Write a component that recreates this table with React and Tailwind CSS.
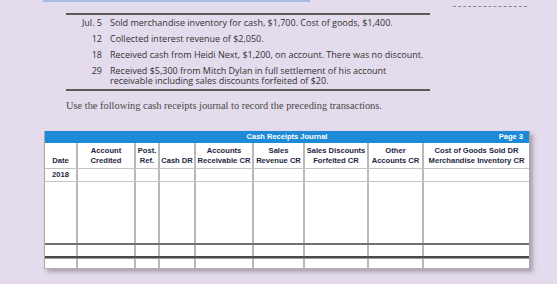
import React from "react";

const cols = "grid grid-cols-[31px_58px_24px_36px_58px_51px_64px_55px_107px]";
const cell = "border-l-2 border-[#b8b8b8] first:border-l-0";

const headers = [
  ["Date"],
  ["Account", "Credited"],
  ["Post.", "Ref."],
  ["Cash DR"],
  ["Accounts", "Receivable CR"],
  ["Sales", "Revenue CR"],
  ["Sales Discounts", "Forfeited CR"],
  ["Other", "Accounts CR"],
  ["Cost of Goods Sold DR", "Merchandise Inventory CR"],
];

const transactions = [
  { day: "Jul. 5", text: "Sold merchandise inventory for cash, $1,700. Cost of goods, $1,400." },
  { day: "12", text: "Collected interest revenue of $2,050." },
  { day: "18", text: "Received cash from Heidi Next, $1,200, on account. There was no discount." },
  {
    day: "29",
    text: "Received $5,300 from Mitch Dylan in full settlement of his account",
    text2: "receivable including sales discounts forfeited of $20.",
  },
];

// empty row with the column rules
function Row({ h, extra = "", children }) {
  return (
    <div className={`${cols} ${h} ${extra}`}>
      {headers.map((_, i) => (
        <div key={i} className={cell}>
          {i === 0 ? children : null}
        </div>
      ))}
    </div>
  );
}

export default function App() {
  return (
    <div className="w-[557px] h-[284px] overflow-hidden bg-[#e4dbec] font-['Liberation_Sans',Arial,sans-serif]">
      {/* top scraps */}
      <div className="flex items-start h-[13px]">
        <div className="ml-[43px] w-[267px] h-[2px] bg-[#a6bde0]" />
        <div className="ml-[143px] mt-[6px] w-[74px] border-t border-dashed border-[#8a8490]" />
      </div>
      <div className="ml-[66px] w-[364px] border-t-2 border-[#5a5a5a]" />

      {/* transactions */}
      <div className="ml-[66px] w-[364px] pt-[3px] flex flex-col gap-[6px] text-[9px] leading-[10px] text-[#333] font-['Open_Sans',sans-serif]">
        {transactions.map((t) => (
          <div key={t.day} className="flex whitespace-nowrap">
            <div className="w-[36px] text-right shrink-0">{t.day}</div>
            <div className="ml-[8px]">
              <div>{t.text}</div>
              {t.text2 && <div>{t.text2}</div>}
            </div>
          </div>
        ))}
      </div>
      <div className="ml-[66px] mt-[3px] w-[364px] border-t-2 border-[#5a5a5a]" />

      <p className="ml-[66px] mt-[9px] text-[10.4px] leading-[12px] text-[#4a4a4a] whitespace-nowrap font-['Liberation_Serif',serif]">
        Use the following cash receipts journal to record the preceding transactions.
      </p>

      {/* journal */}
      <div className="ml-[44px] mt-[19px] w-[486px] bg-white border-x border-[#a8a8a8] shadow-[3px_3px_4px_rgba(60,50,70,0.35)] text-[#1c2842] font-bold">
        <div className="h-[12px] bg-[#1c8ad7] text-white text-[7.5px] leading-[12px] relative flex justify-center">
          <span>Cash Receipts Journal</span>
          <span className="absolute right-[6px] top-0">Page 3</span>
        </div>
        <div className={`${cols} h-[26px] border-b border-[#c4c4c4] text-[7.6px] leading-[10px]`}>
          {headers.map((lines, i) => (
            <div key={i} className={`${cell} flex flex-col justify-end items-center pb-[2px] text-center whitespace-nowrap`}>
              {lines.map((l) => (
                <div key={l}>{l}</div>
              ))}
            </div>
          ))}
        </div>
        <Row h="h-[13px]" extra="border-b border-[#c4c4c4]">
          <div className="text-[7.6px] leading-[12px] text-center">2018</div>
        </Row>
        <Row h="h-[61px]" />
        <div className="h-[2px] bg-[#707070]" />
        <Row h="h-[11px]" />
        <div className="h-[2px] bg-[#4a4a4a]" />
        <div className="h-[1px] bg-[#9a9a9a]" />
        <Row h="h-[10px]" extra="border-b border-[#b0b0b0]" />
      </div>
    </div>
  );
}
